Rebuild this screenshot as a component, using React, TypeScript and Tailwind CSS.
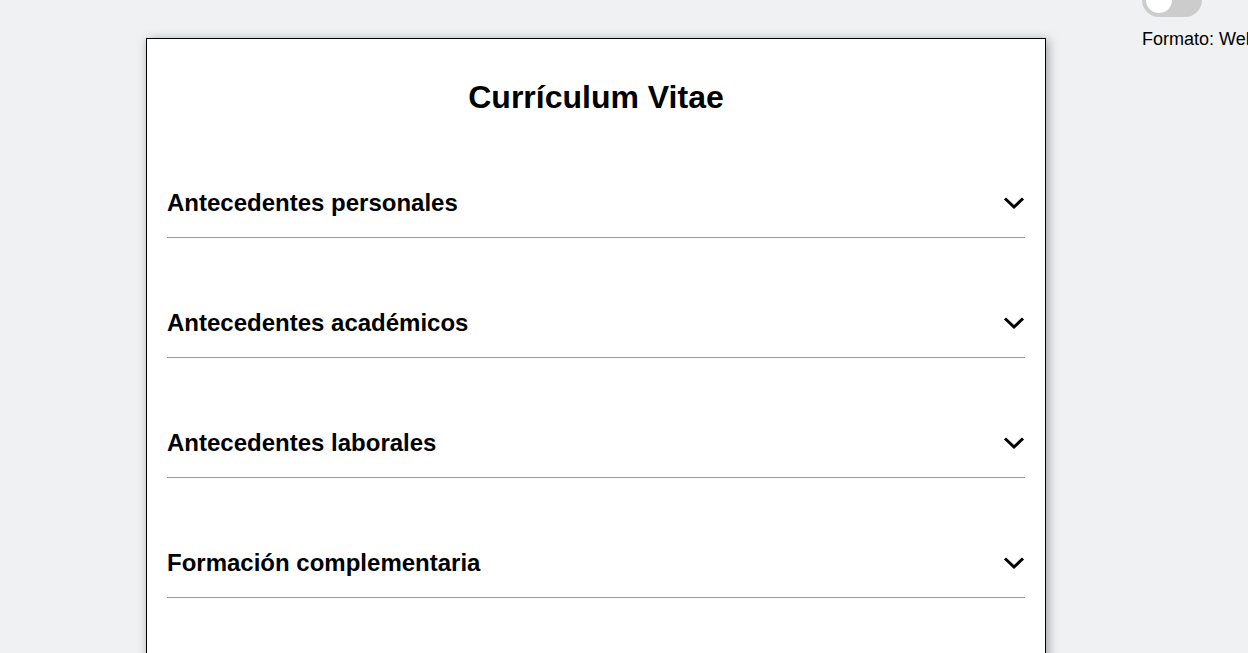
import React from "react";

const sections = [
  "Antecedentes personales",
  "Antecedentes académicos",
  "Antecedentes laborales",
  "Formación complementaria",
];

function Chevron() {
  return (
    <svg width="22" height="14" viewBox="0 0 22 14" fill="none">
      <polyline
        points="2,2.5 11,11 20,2.5"
        stroke="black"
        strokeWidth="3"
        strokeLinecap="butt"
        strokeLinejoin="miter"
      />
    </svg>
  );
}

export default function App() {
  return (
    <div
      className="w-screen h-screen overflow-hidden bg-[#f0f1f3] flex items-start pl-[146px] pt-[38px]"
      style={{ fontFamily: '"Liberation Sans", Arial, sans-serif' }}
    >
      <div className="w-[900px] shrink-0 min-h-[700px] bg-white border border-black shadow-[2px_2px_10px_rgba(0,0,0,0.35)] pt-[40px] px-[20px]">
        <h1 className="text-center text-[32px] leading-[37px] font-bold text-black">
          Currículum Vitae
        </h1>
        {sections.map((title, i) => (
          <div
            key={title}
            className={`${i === 0 ? "mt-[73px]" : "mt-[71px]"} flex items-center justify-between pb-[20px] border-b border-[#999]`}
          >
            <h2 className="text-[24px] leading-[28px] font-bold text-black">
              {title}
            </h2>
            <Chevron />
          </div>
        ))}
      </div>

      <div className="ml-[96px] -mt-[55px] flex flex-col items-start shrink-0">
        <div className="w-[60px] h-[34px] rounded-full bg-[#cccccc] flex items-center px-[4px]">
          <div className="w-[26px] h-[26px] rounded-full bg-white"></div>
        </div>
        <p className="mt-[12px] text-[18px] leading-[21px] text-black whitespace-nowrap">
          Formato: Web
        </p>
      </div>
    </div>
  );
}
